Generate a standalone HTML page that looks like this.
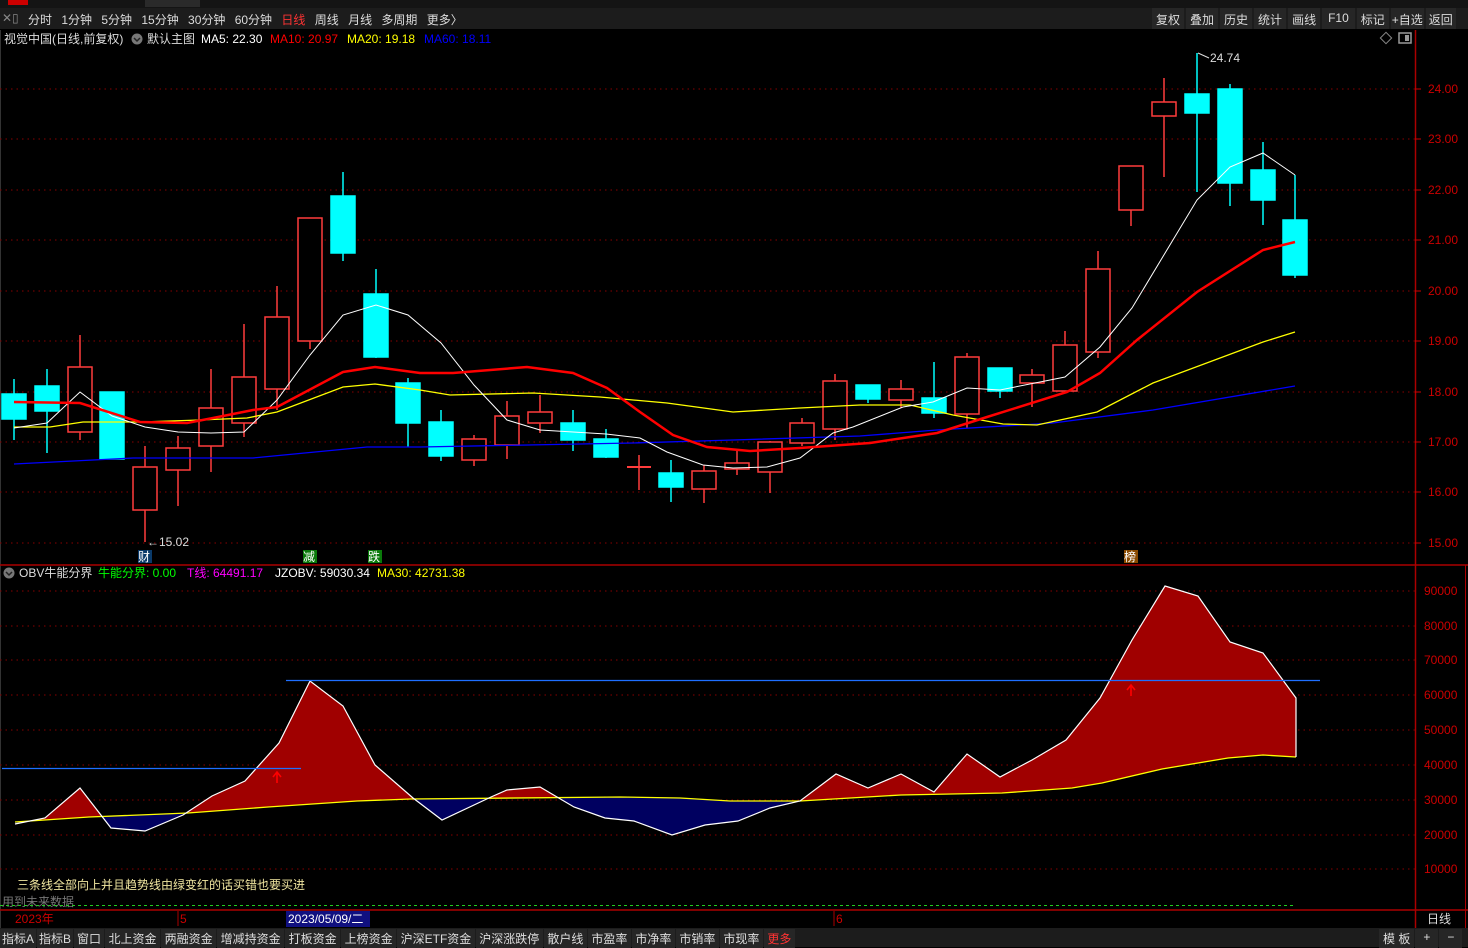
<!DOCTYPE html>
<html><head><meta charset="utf-8"><style>
html,body{margin:0;padding:0;background:#000;width:1468px;height:947px;overflow:hidden;font-family:"Liberation Sans","Noto Sans CJK SC",sans-serif;}
.bar{position:absolute;left:0;width:1468px;font-size:12px;color:#ddd;}
.bb span{background:#262626;padding:1px 3.5px}
</style></head><body>
<div class="bar" style="top:0;height:8px;background:#141414">
 <div style="position:absolute;left:8px;top:0;width:20px;height:5px;background:#c00"></div>
 <div style="position:absolute;left:145px;top:0;width:55px;height:7px;background:#2a2a2a"></div>
</div>
<div class="bar" style="top:8px;height:21px;background:#1c1c1c">
 <span style="position:absolute;left:2px;top:3px;color:#888">✕▯</span>
 <span style="position:absolute;left:28px;top:3px;word-spacing:6px">分时 1分钟 5分钟 15分钟 30分钟 60分钟 <span style="color:#f33">日线</span> 周线 月线 多周期 更多〉</span>
 <div style="position:absolute;left:1152px;top:0;height:21px;display:flex;gap:2px">
  <span style="background:#262626;padding:3px 4px">复权</span><span style="background:#262626;padding:3px 4px">叠加</span><span style="background:#262626;padding:3px 4px">历史</span><span style="background:#262626;padding:3px 4px">统计</span><span style="background:#262626;padding:3px 4px">画线</span><span style="background:#262626;padding:3px 6px">F10</span><span style="background:#262626;padding:3px 4px">标记</span><span style="background:#262626;padding:3px 1px">+自选</span><span style="background:#262626;padding:3px 3px">返回</span>
 </div>
</div>
<svg width="1468" height="947" style="position:absolute;left:0;top:0" font-family="Liberation Sans,Noto Sans CJK SC,sans-serif" font-size="12">
<g font-size="12">
<text x="4" y="43" fill="#ddd">视觉中国(日线,前复权)</text>
<circle cx="137" cy="39" r="5.5" fill="#777"/><path d="M134 38l3 3 3-3" stroke="#222" fill="none" stroke-width="1.5"/>
<text x="147" y="43" fill="#ddd">默认主图</text>
<text x="201" y="43" fill="#fff">MA5: 22.30</text>
<text x="270" y="43" fill="#f00">MA10: 20.97</text>
<text x="347" y="43" fill="#ff0">MA20: 19.18</text>
<text x="424" y="43" fill="#00f">MA60: 18.11</text>
</g>
<rect x="1382" y="34" width="8" height="8" transform="rotate(45 1386 38)" fill="none" stroke="#888"/>
<rect x="1399" y="33" width="12" height="10" fill="none" stroke="#999" stroke-width="1.5"/><rect x="1405" y="35" width="4" height="6" fill="#999"/>
<line x1="0.5" y1="30" x2="0.5" y2="928" stroke="#333"/>
<line x1="1415.5" y1="30" x2="1415.5" y2="928" stroke="#a00" stroke-width="1.5"/>
<line x1="1465.5" y1="565" x2="1465.5" y2="928" stroke="#a00"/>
<g stroke="#800" stroke-dasharray="1.5 4">
<line x1="0" y1="89" x2="1415" y2="89"/><line x1="0" y1="139" x2="1415" y2="139"/><line x1="0" y1="190" x2="1415" y2="190"/><line x1="0" y1="240" x2="1415" y2="240"/><line x1="0" y1="291" x2="1415" y2="291"/><line x1="0" y1="341" x2="1415" y2="341"/><line x1="0" y1="392" x2="1415" y2="392"/><line x1="0" y1="442" x2="1415" y2="442"/><line x1="0" y1="492" x2="1415" y2="492"/><line x1="0" y1="543" x2="1415" y2="543"/>
<line x1="0" y1="591" x2="1415" y2="591"/><line x1="0" y1="626" x2="1415" y2="626"/><line x1="0" y1="660" x2="1415" y2="660"/><line x1="0" y1="695" x2="1415" y2="695"/><line x1="0" y1="730" x2="1415" y2="730"/><line x1="0" y1="765" x2="1415" y2="765"/><line x1="0" y1="800" x2="1415" y2="800"/><line x1="0" y1="835" x2="1415" y2="835"/><line x1="0" y1="869" x2="1415" y2="869"/>
</g>
<g fill="#c00" font-size="12">
<text x="1428" y="93">24.00</text><text x="1428" y="143">23.00</text><text x="1428" y="194">22.00</text><text x="1428" y="244">21.00</text><text x="1428" y="295">20.00</text><text x="1428" y="345">19.00</text><text x="1428" y="396">18.00</text><text x="1428" y="446">17.00</text><text x="1428" y="496">16.00</text><text x="1428" y="547">15.00</text>
<text x="1424" y="595">90000</text><text x="1424" y="630">80000</text><text x="1424" y="664">70000</text><text x="1424" y="699">60000</text><text x="1424" y="734">50000</text><text x="1424" y="769">40000</text><text x="1424" y="804">30000</text><text x="1424" y="839">20000</text><text x="1424" y="873">10000</text>
</g>
<g stroke="#c00"><line x1="1415" y1="89" x2="1421" y2="89"/><line x1="1415" y1="139" x2="1421" y2="139"/><line x1="1415" y1="190" x2="1421" y2="190"/><line x1="1415" y1="240" x2="1421" y2="240"/><line x1="1415" y1="291" x2="1421" y2="291"/><line x1="1415" y1="341" x2="1421" y2="341"/><line x1="1415" y1="392" x2="1421" y2="392"/><line x1="1415" y1="442" x2="1421" y2="442"/><line x1="1415" y1="492" x2="1421" y2="492"/><line x1="1415" y1="543" x2="1421" y2="543"/></g>
<line x1="0" y1="565" x2="1468" y2="565" stroke="#a00" stroke-width="1.5"/>
<line x1="0" y1="910" x2="1468" y2="910" stroke="#a00" stroke-width="1.5"/>

<g stroke-width="1.5">
<g stroke="#0ff" fill="#0ff">
<line x1="14" y1="379" x2="14" y2="440"/><rect x="2" y="394" width="24" height="25"/>
<line x1="47" y1="369" x2="47" y2="453"/><rect x="35" y="386" width="24" height="25"/>
<rect x="100" y="392" width="24" height="67"/>
<line x1="343" y1="172" x2="343" y2="261"/><rect x="331" y="196" width="24" height="57"/>
<line x1="376" y1="269" x2="376" y2="358"/><rect x="364" y="294" width="24" height="63"/>
<line x1="408" y1="378" x2="408" y2="447"/><rect x="396" y="383" width="24" height="40"/>
<line x1="441" y1="410" x2="441" y2="461"/><rect x="429" y="422" width="24" height="34"/>
<line x1="573" y1="410" x2="573" y2="451"/><rect x="561" y="423" width="24" height="17"/>
<line x1="606" y1="429" x2="606" y2="458"/><rect x="594" y="439" width="24" height="18"/>
<line x1="671" y1="460" x2="671" y2="502"/><rect x="659" y="473" width="24" height="14"/>
<line x1="868" y1="385" x2="868" y2="403"/><rect x="856" y="385" width="24" height="14"/>
<line x1="934" y1="362" x2="934" y2="418"/><rect x="922" y="398" width="24" height="15"/>
<line x1="1000" y1="368" x2="1000" y2="398"/><rect x="988" y="368" width="24" height="23"/>
<line x1="1197" y1="53" x2="1197" y2="192"/><rect x="1185" y="94" width="24" height="19"/>
<line x1="1230" y1="84" x2="1230" y2="206"/><rect x="1218" y="89" width="24" height="94"/>
<line x1="1263" y1="142" x2="1263" y2="225"/><rect x="1251" y="170" width="24" height="30"/>
<line x1="1295" y1="175" x2="1295" y2="278"/><rect x="1283" y="220" width="24" height="55"/>
</g>
<g stroke="#ff3c3c" fill="#000">
<line x1="80" y1="335" x2="80" y2="440"/><rect x="68" y="367" width="24" height="65"/>
<line x1="145" y1="446" x2="145" y2="542"/><rect x="133" y="467" width="24" height="43"/>
<line x1="178" y1="436" x2="178" y2="506"/><rect x="166" y="448" width="24" height="22"/>
<line x1="211" y1="369" x2="211" y2="472"/><rect x="199" y="408" width="24" height="38"/>
<line x1="244" y1="324" x2="244" y2="437"/><rect x="232" y="377" width="24" height="46"/>
<line x1="277" y1="286" x2="277" y2="410"/><rect x="265" y="317" width="24" height="72"/>
<line x1="310" y1="218" x2="310" y2="349"/><rect x="298" y="218" width="24" height="123"/>
<line x1="474" y1="435" x2="474" y2="466"/><rect x="462" y="439" width="24" height="21"/>
<line x1="507" y1="401" x2="507" y2="459"/><rect x="495" y="416" width="24" height="29"/>
<line x1="540" y1="395" x2="540" y2="433"/><rect x="528" y="412" width="24" height="11"/>
<line x1="639" y1="455" x2="639" y2="490"/><line x1="627" y1="467" x2="651" y2="467" stroke-width="2"/>
<line x1="704" y1="465" x2="704" y2="503"/><rect x="692" y="471" width="24" height="18"/>
<line x1="737" y1="449" x2="737" y2="475"/><rect x="725" y="463" width="24" height="6"/>
<line x1="770" y1="441" x2="770" y2="493"/><rect x="758" y="442" width="24" height="30"/>
<line x1="802" y1="418" x2="802" y2="446"/><rect x="790" y="423" width="24" height="20"/>
<line x1="835" y1="374" x2="835" y2="440"/><rect x="823" y="381" width="24" height="48"/>
<line x1="901" y1="380" x2="901" y2="408"/><rect x="889" y="389" width="24" height="11"/>
<line x1="967" y1="353" x2="967" y2="428"/><rect x="955" y="357" width="24" height="57"/>
<line x1="1032" y1="369" x2="1032" y2="407"/><rect x="1020" y="375" width="24" height="8"/>
<line x1="1065" y1="331" x2="1065" y2="391"/><rect x="1053" y="345" width="24" height="46"/>
<line x1="1098" y1="251" x2="1098" y2="358"/><rect x="1086" y="269" width="24" height="83"/>
<line x1="1131" y1="166" x2="1131" y2="226"/><rect x="1119" y="166" width="24" height="44"/>
<line x1="1164" y1="78" x2="1164" y2="177"/><rect x="1152" y="102" width="24" height="14"/>
</g>
</g>
<polyline fill="none" stroke="#00f" stroke-width="1.3" points="14,464 133,458 253,458 367,447 420,447 633,443 733,440 860,436 937,430 1053,423 1153,410 1295,386"/>
<polyline fill="none" stroke="#ff0" stroke-width="1.3" points="14,427 50,427 83,422 140,422 200,420 247,418 277,412 343,387 375,384 420,390 450,395 533,393 600,397 667,403 733,412 800,408 860,405 910,405 953,415 1003,424 1037,425 1097,412 1153,383 1263,342 1295,332"/>
<polyline fill="none" stroke="#fff" stroke-width="1" points="14,428 47,423 80,392 112,416 145,427 178,432 211,433 244,432 277,400 310,355 343,315 376,305 408,315 441,343 474,385 507,420 540,430 573,432 606,434 640,438 667,452 703,465 733,468 767,467 800,458 833,433 853,427 903,407 933,402 967,388 1000,390 1065,377 1100,347 1132,308 1197,200 1230,167 1263,153 1295,175"/>
<polyline fill="none" stroke="#f00" stroke-width="2.5" points="14,402 80,403 140,422 187,423 213,418 253,410 277,407 343,372 375,367 420,373 453,373 527,367 573,373 607,388 640,412 673,435 707,447 750,451 800,448 870,443 937,433 987,417 1067,392 1100,373 1137,340 1197,292 1263,250 1295,242"/>
<text x="1210" y="62" fill="#ddd" font-size="12">24.74</text><path d="M1198 53l11 5" stroke="#ddd"/>
<text x="147" y="546" fill="#ddd" font-size="12">←15.02</text>
<rect x="138" y="550" width="14" height="13" fill="#0a3a6a"/><text x="138" y="561" fill="#fff" font-size="12">财</text>
<rect x="303" y="550" width="14" height="13" fill="#0a7a0a"/><text x="303" y="561" fill="#fff" font-size="12">减</text>
<rect x="368" y="550" width="14" height="13" fill="#0a7a0a"/><text x="368" y="561" fill="#fff" font-size="12">跌</text>
<rect x="1124" y="550" width="14" height="13" fill="#8a4a00"/><text x="1124" y="561" fill="#fff" font-size="12">榜</text>

<g font-size="12">
<circle cx="9" cy="573" r="5.5" fill="#777"/><path d="M6 572l3 3 3-3" stroke="#222" fill="none" stroke-width="1.5"/>
<text x="19" y="577" fill="#ddd">OBV牛能分界</text>
<text x="98" y="577" fill="#0f0">牛能分界: 0.00</text>
<text x="187" y="577" fill="#f0f">T线: 64491.17</text>
<text x="275" y="577" fill="#fff">JZOBV: 59030.34</text>
<text x="377" y="577" fill="#ff0">MA30: 42731.38</text>
</g>
<defs>
<clipPath id="up"><polygon points="0,565 0,822 15,822 89,817 188,813 268,807 357,801 411,799 620,797 680,798 730,801 800,801 901,795 1002,793 1072,788 1102,783 1162,769 1228,758 1263,755 1296,757 1300,757 1300,565"/></clipPath>
<clipPath id="dn"><polygon points="0,910 0,822 15,822 89,817 188,813 268,807 357,801 411,799 620,797 680,798 730,801 800,801 901,795 1002,793 1072,788 1102,783 1162,769 1228,758 1263,755 1296,757 1300,757 1300,910"/></clipPath>
</defs>
<polygon clip-path="url(#up)" fill="#a00000" points="15,824 45,818 80,788 111,828 145,831 183,815 212,796 245,781 279,743 310,681 343,706 375,765 413,798 442,820 491,797 507,790 540,787 574,807 605,818 634,821 672,835 705,825 738,821 770,808 800,801 836,774 868,788 901,774 934,792 967,754 1000,777 1032,760 1066,740 1100,698 1132,640 1165,586 1198,596 1230,642 1263,653 1296,698 1296,757 1263,755 1228,758 1162,769 1102,783 1072,788 1002,793 901,795 800,801 730,801 680,798 620,797 411,799 357,801 268,807 188,813 89,817 15,822"/>
<polygon clip-path="url(#dn)" fill="#000060" points="15,824 45,818 80,788 111,828 145,831 183,815 212,796 245,781 279,743 310,681 343,706 375,765 413,798 442,820 491,797 507,790 540,787 574,807 605,818 634,821 672,835 705,825 738,821 770,808 800,801 836,774 868,788 901,774 934,792 967,754 1000,777 1032,760 1066,740 1100,698 1132,640 1165,586 1198,596 1230,642 1263,653 1296,698 1296,757 1263,755 1228,758 1162,769 1102,783 1072,788 1002,793 901,795 800,801 730,801 680,798 620,797 411,799 357,801 268,807 188,813 89,817 15,822"/>
<polyline fill="none" stroke="#ff0" stroke-width="1.3" points="15,822 89,817 188,813 268,807 357,801 411,799 620,797 680,798 730,801 800,801 901,795 1002,793 1072,788 1102,783 1162,769 1228,758 1263,755 1296,757"/>
<polyline fill="none" stroke="#fff" stroke-width="1.2" points="15,824 45,818 80,788 111,828 145,831 183,815 212,796 245,781 279,743 310,681 343,706 375,765 413,798 442,820 491,797 507,790 540,787 574,807 605,818 634,821 672,835 705,825 738,821 770,808 800,801 836,774 868,788 901,774 934,792 967,754 1000,777 1032,760 1066,740 1100,698 1132,640 1165,586 1198,596 1230,642 1263,653 1296,698 1296,757"/>
<line x1="2" y1="768.5" x2="301" y2="768.5" stroke="#1e6fff" stroke-width="1.3"/>
<line x1="286" y1="680.5" x2="1320" y2="680.5" stroke="#1e6fff" stroke-width="1.3"/>
<path d="M277 783v-10M273 777l4-5 4 5" stroke="#f00" stroke-width="1.6" fill="none"/>
<path d="M1131 696v-10M1127 690l4-5 4 5" stroke="#f00" stroke-width="1.6" fill="none"/>
<text x="17" y="889" fill="#f0e6a0" font-size="12">三条线全部向上并且趋势线由绿变红的话买错也要买进</text>
<text x="2" y="906" fill="#777" font-size="12">用到未来数据</text>
<line x1="0" y1="905.5" x2="1295" y2="905.5" stroke="#2c2" stroke-dasharray="3 3"/>
<text x="15" y="923" fill="#c00" font-size="12">2023年</text>
<line x1="178" y1="911" x2="178" y2="926" stroke="#a00"/><text x="180" y="923" fill="#c00" font-size="12">5</text>
<rect x="286" y="911" width="84" height="16" fill="#101080"/><text x="288" y="923" fill="#fff" font-size="12">2023/05/09/二</text>
<line x1="834" y1="911" x2="834" y2="926" stroke="#a00"/><text x="836" y="923" fill="#c00" font-size="12">6</text>
<text x="1427" y="923" fill="#ddd" font-size="12">日线</text>
</svg>
<div class="bar" style="top:928px;height:19px;background:#1c1c1c;font-size:12px">
 <div class="bb" style="position:absolute;left:0;top:1px;display:flex;gap:1px">
  <span style="padding:1px 2px">指标A</span><span style="padding:1px 2px">指标B</span><span style="padding:1px 3px">窗口</span><span>北上资金</span><span>两融资金</span><span>增减持资金</span><span>打板资金</span><span>上榜资金</span><span>沪深ETF资金</span><span>沪深涨跌停</span><span>散户线</span><span>市盈率</span><span>市净率</span><span>市销率</span><span>市现率</span><span style="color:#f33">更多</span>
 </div>
 <div style="position:absolute;left:1379px;top:1px;display:flex;gap:1px">
  <span style="background:#262626;padding:1px 4px">模 板</span><span style="background:#262626;padding:1px 8px">+</span><span style="background:#262626;padding:1px 8px">−</span>
 </div>
</div>
</body></html>
